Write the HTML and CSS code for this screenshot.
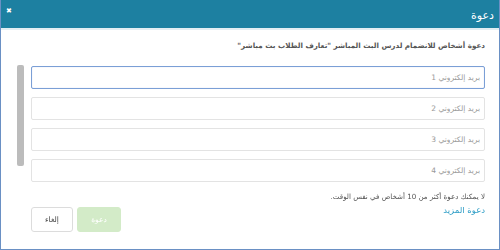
FILE: index.html
```html
<!DOCTYPE html>
<html lang="ar" dir="rtl">
<head>
  <meta charset="UTF-8" />
  <meta name="viewport" content="width=device-width, initial-scale=1.0"/>
  <title>دعوة</title>
  <link rel="stylesheet" href="styles.css">
</head>
<body>

<div class="modal">
  <div class="modal-header">
    <span class="modal-title">دعوة</span>
    <span class="close-btn">&#10006;</span>
  </div>

  <div class="modal-body">
    <p class="intro">دعوة أشخاص للانضمام لدرس البث المباشر "تعارف الطلاب بث مباشر"</p>

    <div class="email-area">
      <div class="email-list">
        <input type="text" class="email-input focused" placeholder="بريد إلكتروني 1" autofocus>
        <input type="text" class="email-input" placeholder="بريد إلكتروني 2">
        <input type="text" class="email-input" placeholder="بريد إلكتروني 3">
        <input type="text" class="email-input" placeholder="بريد إلكتروني 4">
      </div>
      <div class="scroll-track">
        <div class="scroll-thumb"></div>
      </div>
    </div>

    <p class="note">لا يمكنك دعوة أكثر من 10 أشخاص في نفس الوقت.</p>

    <div class="footer-row">
      <a class="more-link" href="#">دعوة المزيد</a>
      <div class="actions">
        <button class="btn btn-invite" disabled>دعوة</button>
        <button class="btn btn-cancel">إلغاء</button>
      </div>
    </div>
  </div>
</div>

</body>
</html>
```

FILE: styles.css
```css
html, body {
  margin: 0;
  padding: 0;
}
body {
  font-family: "DejaVu Sans", sans-serif;
  background: #fff;
}
.modal {
  width: 500px;
  height: 250px;
  box-sizing: border-box;
  border: 1px solid #6a90c4;
  border-top: none;
  display: flex;
  flex-direction: column;
}
.modal-header {
  height: 28px;
  background: #1d80a1;
  border-bottom: 2px solid #e3eef3;
  display: flex;
  justify-content: space-between;
  align-items: center;
  padding: 0 5px 0 5px;
  color: #fff;
}
.modal-title {
  font-size: 11px;
  margin-top: 2px;
}
.close-btn {
  font-size: 7px;
  font-weight: bold;
  align-self: flex-start;
  margin-top: 7px;
}
.modal-body {
  padding: 0 14px 0 14px;
}
.intro {
  margin: 10px 0 0 0;
  font-size: 7.2px;
  font-weight: bold;
  color: #555;
  line-height: 12px;
}
.email-area {
  display: flex;
  margin-top: 13px;
}
.email-list {
  flex: 1;
  display: flex;
  flex-direction: column;
  gap: 8px;
  margin-top: 1px;
}
.email-input {
  height: 23px;
  box-sizing: border-box;
  border: 1px solid #e3e3e3;
  border-radius: 2px;
  padding: 0 4px;
  font-family: "DejaVu Sans", sans-serif;
  font-size: 7.5px;
  color: #333;
  background: #fff;
  outline: none;
}
.email-input::placeholder {
  color: #999;
}
.email-input.focused {
  border-color: #7b9fd6;
  box-shadow: inset 0 0 1px rgba(80, 120, 200, 0.4);
}
.scroll-track {
  width: 16px;
  display: flex;
  justify-content: flex-end;
}
.scroll-thumb {
  width: 7px;
  height: 101px;
  margin-left: 2px;
  background: #bcbcbc;
  border-radius: 2px;
}
.note {
  margin: 9px 0 0 0;
  font-size: 7.1px;
  color: #555;
  line-height: 12px;
}
.footer-row {
  display: flex;
  justify-content: space-between;
  align-items: flex-start;
  padding-left: 16px;
}
.more-link {
  font-size: 8.5px;
  color: #2d9dc6;
  text-decoration: none;
  line-height: 13px;
  margin-top: 1px;
}
.actions {
  display: flex;
  gap: 4px;
  margin-top: 4px;
}
.btn {
  height: 25px;
  box-sizing: border-box;
  border-radius: 3px;
  font-family: "DejaVu Sans", sans-serif;
  font-size: 7.5px;
  padding: 0;
}
.btn-invite {
  width: 44px;
  background: #d3ebc8;
  border: 1px solid #d3ebc8;
  color: #fff;
}
.btn-cancel {
  width: 42px;
  background: #fff;
  border: 1px solid #dcdcdc;
  color: #444;
}
```
